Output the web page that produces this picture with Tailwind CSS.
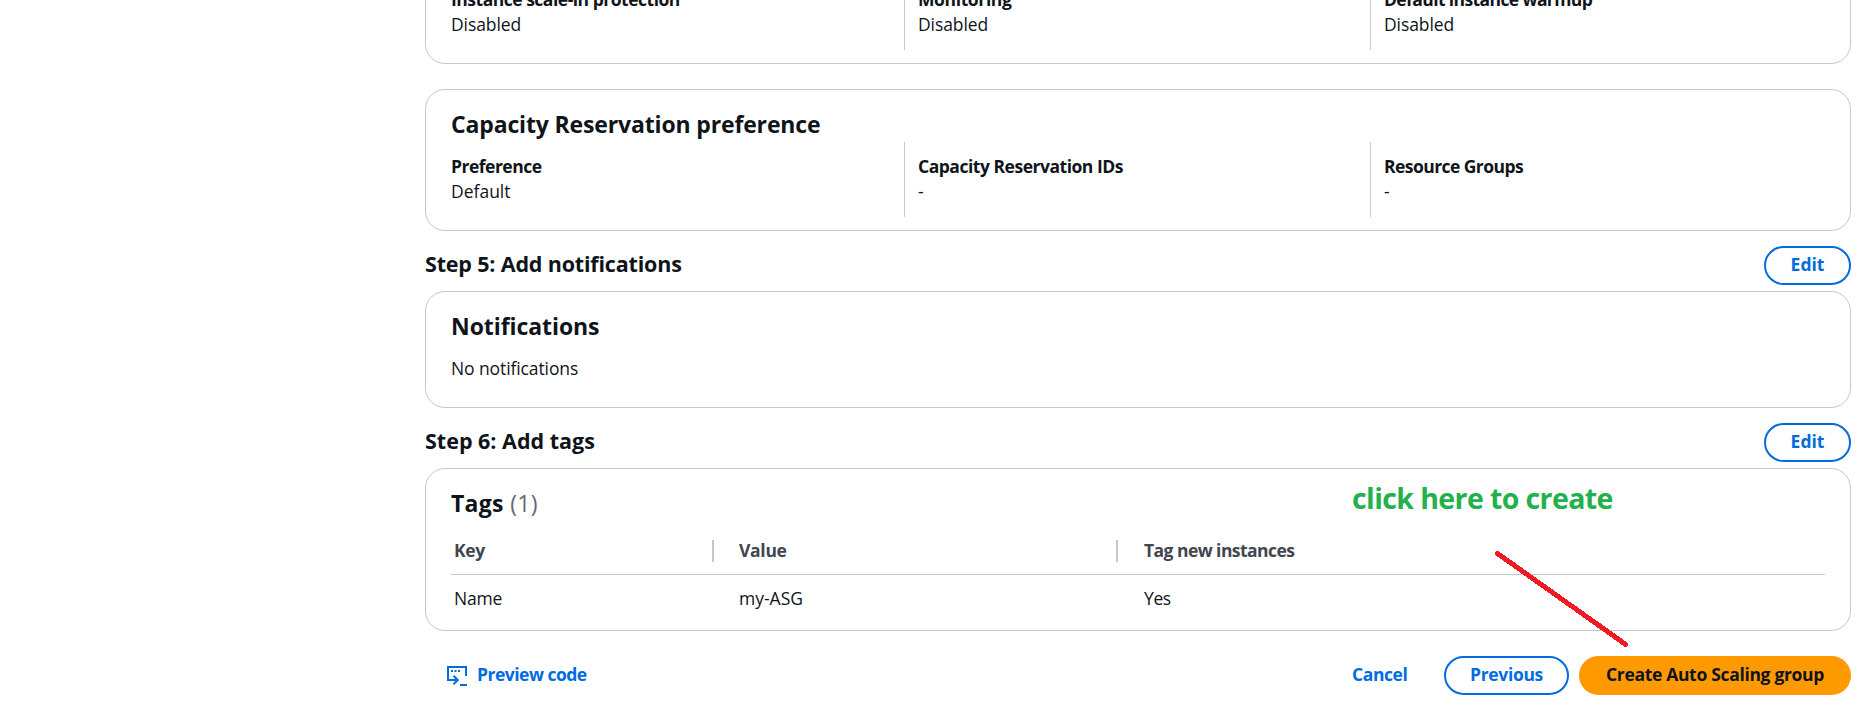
<!DOCTYPE html>
<html lang="en">
<head>
<meta charset="utf-8">
<title>Create Auto Scaling group</title>
<script src="https://cdn.jsdelivr.net/npm/@tailwindcss/browser@4"></script>
</head>
<body class="bg-white">
<div class="relative w-[1863px] h-[713px] overflow-hidden bg-white font-['Open_Sans','Noto_Sans',sans-serif] text-[17.5px] leading-[25px] text-[#0f141a]">
  <main class="ml-[425px] w-[1426px] flex flex-col">

    <section class="-mt-10 h-[104px] shrink-0 rounded-[20px] border border-[#c6c6cd] px-[25px] pb-[13px] flex flex-col justify-end">
      <div class="grid grid-cols-[453px_466px_1fr]">
        <div class="pt-3 pb-[13px]">
          <div class="font-bold tracking-[-0.49px]">Instance scale-in protection</div>
          <div class="tracking-[-0.1px]">Disabled</div>
        </div>
        <div class="pt-3 pb-[13px] pl-[13px] border-l border-[#c6c6cd]">
          <div class="font-bold tracking-[-0.38px]">Monitoring</div>
          <div class="tracking-[-0.1px]">Disabled</div>
        </div>
        <div class="pt-3 pb-[13px] pl-[13px] border-l border-[#c6c6cd]">
          <div class="font-bold tracking-[-0.6px]">Default instance warmup</div>
          <div class="tracking-[-0.1px]">Disabled</div>
        </div>
      </div>
    </section>

    <section class="mt-[25px] h-[142px] rounded-[20px] border border-[#c6c6cd] px-[25px] pt-[19px]">
      <h2 class="mb-[3px] text-[23px] leading-[30px] font-bold tracking-[-0.15px]">Capacity Reservation preference</h2>
      <div class="grid grid-cols-[453px_466px_1fr]">
        <div class="pt-3 pb-[13px]">
          <div class="font-bold tracking-[-0.5px]">Preference</div>
          <div>Default</div>
        </div>
        <div class="pt-3 pb-[13px] pl-[13px] border-l border-[#c6c6cd]">
          <div class="font-bold tracking-[-0.48px]">Capacity Reservation IDs</div>
          <div>-</div>
        </div>
        <div class="pt-3 pb-[13px] pl-[13px] border-l border-[#c6c6cd]">
          <div class="font-bold tracking-[-0.56px]">Resource Groups</div>
          <div>-</div>
        </div>
      </div>
    </section>

    <div class="mt-[15px] mb-1.5 flex h-[39px] items-center justify-between">
      <h2 class="pb-[3px] text-[21.5px] leading-[30px] font-bold tracking-[-0.17px]">Step 5: Add notifications</h2>
      <button class="flex h-[39px] w-[87px] items-center justify-center rounded-[20px] border-2 border-[#006ce0] pb-0.5 font-bold text-[#006ce0]">Edit</button>
    </div>

    <section class="h-[117px] rounded-[20px] border border-[#c6c6cd] px-[25px] pt-[19px]">
      <h2 class="mb-[15px] text-[23px] leading-[30px] font-bold tracking-[-0.07px]">Notifications</h2>
      <p class="tracking-[-0.1px]">No notifications</p>
    </section>

    <div class="mt-[15px] mb-1.5 flex h-[39px] items-center justify-between">
      <h2 class="pb-[3px] text-[21.5px] leading-[30px] font-bold">Step 6: Add tags</h2>
      <button class="flex h-[39px] w-[87px] items-center justify-center rounded-[20px] border-2 border-[#006ce0] pb-0.5 font-bold text-[#006ce0]">Edit</button>
    </div>

    <section class="h-[163px] rounded-[20px] border border-[#c6c6cd] px-[25px] pt-[19px]">
      <h2 class="text-[23px] leading-[30px] font-bold tracking-[0.3px]">Tags <span class="font-normal text-[#656871]">(1)</span></h2>
      <div class="mt-[22px] grid grid-cols-[263px_404px_1fr] border-b border-[#c6c6cd] pb-3 leading-5 font-bold text-[#424650]">
        <div class="border-r-2 border-[#c6c6cd] pb-0.5 pl-[3px] tracking-[-0.3px]">Key</div>
        <div class="border-r-2 border-[#c6c6cd] pb-0.5 pl-[25px] tracking-[-0.3px]">Value</div>
        <div class="pb-0.5 pl-[26px] tracking-[-0.55px]">Tag new instances</div>
      </div>
      <div class="grid grid-cols-[263px_404px_1fr] pt-[11px]">
        <div class="pl-[3px] tracking-[-0.2px]">Name</div>
        <div class="pl-[25px]">my-ASG</div>
        <div class="pl-[26px] tracking-[-0.4px]">Yes</div>
      </div>
    </section>

    <div class="mt-[25px] flex h-[39px] items-center font-bold text-[#006ce0]">
      <a class="ml-[22px] flex items-center gap-2.5">
        <svg class="size-5" viewBox="0 0 20 20" fill="none" stroke="currentColor" stroke-width="2">
          <path d="M19 10V1H1v13h9.5"/>
          <path d="M6.5 9.8l4.2 4.2l-4.2 4.2"/>
          <path d="M13 19h7"/>
          <path d="M4 5h2m1.5 0h2M11 5h2"/>
        </svg>
        <span class="pb-0.5 tracking-[-0.5px]">Preview code</span>
      </a>
      <a class="mr-9 ml-auto w-14 pb-0.5 tracking-[-0.4px]">Cancel</a>
      <button class="mr-2.5 flex h-[39px] w-[125px] items-center justify-center rounded-[20px] border-2 border-[#006ce0] pb-0.5 tracking-[-0.33px]">Previous</button>
      <button class="flex h-[39px] w-[272px] items-center justify-center rounded-[20px] bg-[#ff9900] pb-0.5 tracking-[-0.32px] text-[#0f141a]">Create Auto Scaling group</button>
    </div>
  </main>

  <!-- Annotation laid over the page -->
  <div class="absolute top-[480px] left-[1352px] text-[28.5px] leading-9 font-bold tracking-[-0.6px] whitespace-nowrap text-[#22b14c]">click here to create</div>
  <svg class="absolute top-[545px] left-[1490px]" width="145" height="110" viewBox="0 0 145 110" fill="none" stroke="#ed1c24" stroke-width="5" stroke-linecap="round" shape-rendering="crispEdges">
    <path d="M7.5 8.5L135.5 99.3"/>
  </svg>
</div>
</body>
</html>
